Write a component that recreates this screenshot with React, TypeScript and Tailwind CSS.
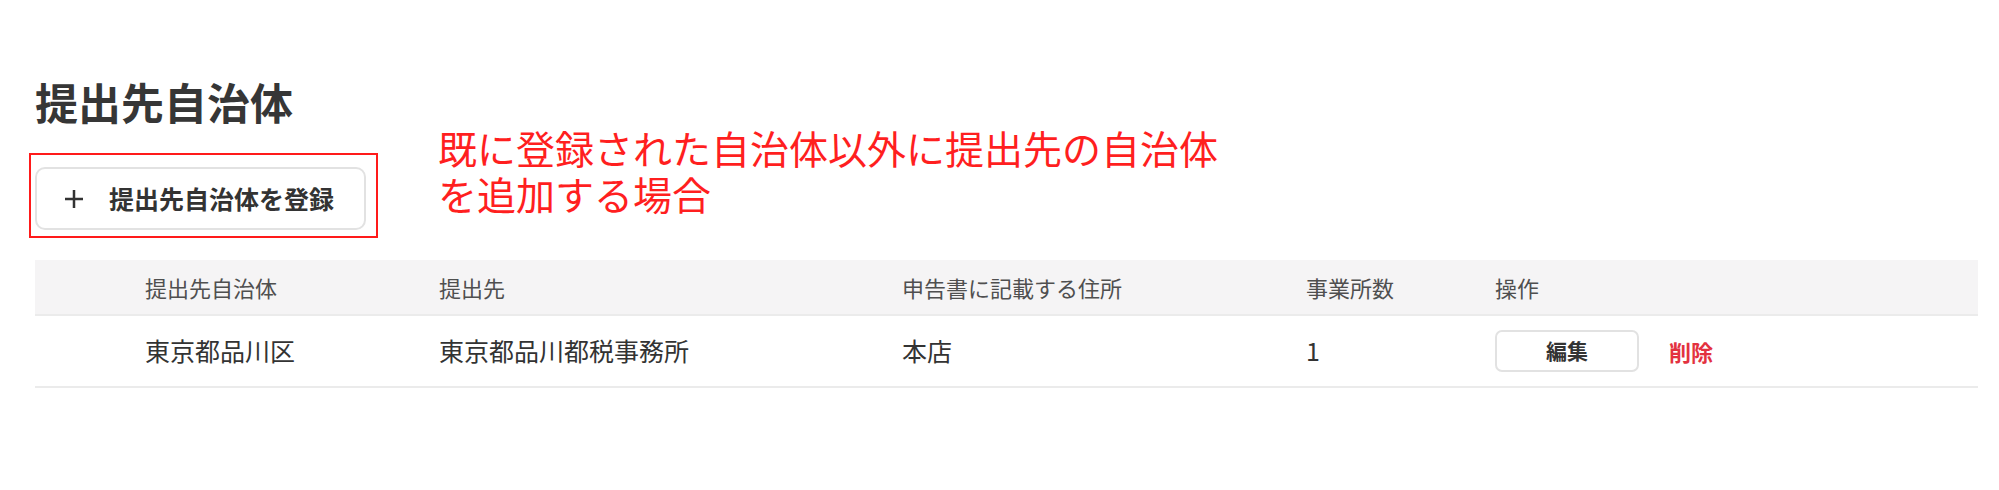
import React from 'react';

function PlusIcon(){
  return (
    <svg className="w-[20px] h-[20px] text-[#333]" viewBox="0 0 20 20" fill="none" stroke="currentColor" strokeWidth="2.5" strokeLinecap="butt">
      <path d="M10 1v18M1 10h18" />
    </svg>
  );
}

const cols = "grid grid-cols-[294px_463px_404px_189px_1fr] pl-[110px] items-center";

export default function App(){
  return (
    <div className="w-[1999px] h-[490px] bg-white pl-[35px] pr-[21px] pt-[80px] font-['Noto_Sans_CJK_JP',sans-serif]">
      <h1 className="w-fit text-[43px] leading-[43px] font-bold text-[#363636]">提出先自治体</h1>

      <div className="flex items-start mt-[1px]">
        <div className="relative mt-[43px]">
          <button className="flex items-center w-[331px] h-[63px] pl-[27px] bg-white border-2 border-[#e2e2e2] rounded-[10px] text-[#333]">
            <PlusIcon />
            <span className="ml-[25px] text-[25px] leading-none font-bold">提出先自治体を登録</span>
          </button>
          {/* annotation frame */}
          <div className="absolute left-[-6px] top-[-14px] w-[349px] h-[85px] border-2 border-[#ff1a1a] pointer-events-none" />
        </div>
        <div className="ml-[72px] text-[39px] leading-[46px] text-[#ff1f1f] font-normal">
          <div>既に登録された自治体以外に提出先の自治体</div>
          <div>を追加する場合</div>
        </div>
      </div>

      <div className="mt-[30px]">
        <div className={`${cols} h-[56px] bg-[#f5f4f5] border-b-2 border-[#ebebeb] text-[22px] text-[#4f4f4f]`}>
          <div>提出先自治体</div>
          <div>提出先</div>
          <div>申告書に記載する住所</div>
          <div>事業所数</div>
          <div>操作</div>
        </div>
        <div className={`${cols} h-[72px] border-b-2 border-[#ebebeb] text-[25px] text-[#333]`}>
          <div>東京都品川区</div>
          <div>東京都品川都税事務所</div>
          <div>本店</div>
          <div>1</div>
          <div className="flex items-center">
            <button className="w-[144px] h-[42px] bg-white border-2 border-[#e2e2e2] rounded-[7px] text-[21px] font-bold text-[#333]">編集</button>
            <button className="ml-[30px] text-[22px] font-bold text-[#e3323f]">削除</button>
          </div>
        </div>
      </div>
    </div>
  );
}
